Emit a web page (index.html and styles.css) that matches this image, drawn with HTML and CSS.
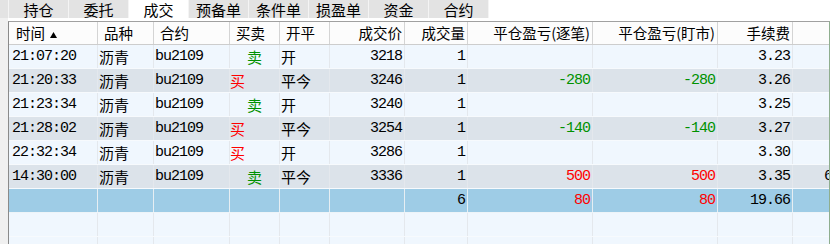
FILE: index.html
```html
<!DOCTYPE html>
<html lang="zh-CN">
<head>
<meta charset="utf-8">
<title>成交</title>
<link rel="stylesheet" href="styles.css">
</head>
<body>
<div class="tabs">
  <div class="tab-lead"></div>
  <div class="tab">持仓</div>
  <div class="tab">委托</div>
  <div class="tab active">成交</div>
  <div class="tab">预备单</div>
  <div class="tab">条件单</div>
  <div class="tab">损盈单</div>
  <div class="tab">资金</div>
  <div class="tab">合约</div>
</div>
<div class="main">
  <div class="gutter"></div>
  <div class="panel">
    <div class="row head">
      <div class="c l">时间 <svg class="sort" width="7" height="6" viewBox="0 0 7 6"><path d="M3.5 0 L7 6 L0 6 Z" fill="#000"/></svg></div>
      <div class="c l">品种</div>
      <div class="c l">合约</div>
      <div class="c l">买卖</div>
      <div class="c l">开平</div>
      <div class="c r">成交价</div>
      <div class="c r">成交量</div>
      <div class="c r">平仓盈亏(逐笔)</div>
      <div class="c r">平仓盈亏(盯市)</div>
      <div class="c r">手续费</div>
      <div class="c"></div>
    </div>

    <div class="row odd">
      <div class="c n t">21:07:20</div><div class="c k">沥青</div><div class="c n t2">bu2109</div>
      <div class="c k sell">卖</div><div class="c k">开</div><div class="c n r">3218</div>
      <div class="c n r">1</div><div class="c n r"></div><div class="c n r"></div>
      <div class="c n r">3.23</div><div class="c"></div>
    </div>
    <div class="row even">
      <div class="c n t">21:20:33</div><div class="c k">沥青</div><div class="c n t2">bu2109</div>
      <div class="c k buy">买</div><div class="c k">平今</div><div class="c n r">3246</div>
      <div class="c n r">1</div><div class="c n r green">-280</div><div class="c n r green">-280</div>
      <div class="c n r">3.26</div><div class="c"></div>
    </div>
    <div class="row odd">
      <div class="c n t">21:23:34</div><div class="c k">沥青</div><div class="c n t2">bu2109</div>
      <div class="c k sell">卖</div><div class="c k">开</div><div class="c n r">3240</div>
      <div class="c n r">1</div><div class="c n r"></div><div class="c n r"></div>
      <div class="c n r">3.25</div><div class="c"></div>
    </div>
    <div class="row even">
      <div class="c n t">21:28:02</div><div class="c k">沥青</div><div class="c n t2">bu2109</div>
      <div class="c k buy">买</div><div class="c k">平今</div><div class="c n r">3254</div>
      <div class="c n r">1</div><div class="c n r green">-140</div><div class="c n r green">-140</div>
      <div class="c n r">3.27</div><div class="c"></div>
    </div>
    <div class="row odd">
      <div class="c n t">22:32:34</div><div class="c k">沥青</div><div class="c n t2">bu2109</div>
      <div class="c k buy">买</div><div class="c k">开</div><div class="c n r">3286</div>
      <div class="c n r">1</div><div class="c n r"></div><div class="c n r"></div>
      <div class="c n r">3.30</div><div class="c"></div>
    </div>
    <div class="row even">
      <div class="c n t">14:30:00</div><div class="c k">沥青</div><div class="c n t2">bu2109</div>
      <div class="c k sell">卖</div><div class="c k">平今</div><div class="c n r">3336</div>
      <div class="c n r">1</div><div class="c n r red">500</div><div class="c n r red">500</div>
      <div class="c n r">3.35</div><div class="c n clip">6</div>
    </div>
    <div class="row total">
      <div class="c"></div><div class="c"></div><div class="c"></div>
      <div class="c"></div><div class="c"></div><div class="c"></div>
      <div class="c n r">6</div><div class="c n r red">80</div><div class="c n r red">80</div>
      <div class="c n r">19.66</div><div class="c"></div>
    </div>
    <div class="row odd">
      <div class="c"></div><div class="c"></div><div class="c"></div><div class="c"></div>
      <div class="c"></div><div class="c"></div><div class="c"></div><div class="c"></div>
      <div class="c"></div><div class="c"></div><div class="c"></div>
    </div>
    <div class="row odd">
      <div class="c"></div><div class="c"></div><div class="c"></div><div class="c"></div>
      <div class="c"></div><div class="c"></div><div class="c"></div><div class="c"></div>
      <div class="c"></div><div class="c"></div><div class="c"></div>
    </div>
  </div>
</div>
</body>
</html>
```
FILE: styles.css
```css
html, body {
  margin: 0;
  padding: 0;
}
body {
  width: 835px;
  height: 244px;
  overflow: hidden;
  background: #ffffff;
  font-family: "Noto Sans CJK SC", sans-serif;
  color: #000;
}
.tabs {
  display: flex;
  height: 18px;
}
.tab-lead {
  width: 8px;
  background: #e3e3e3;
  border-right: 1px solid #f4f4f4;
}
.tab {
  width: 59px;
  height: 18px;
  border-right: 1px solid #f4f4f4;
  background: #e3e3e3;
  text-align: center;
  font-size: 15px;
  line-height: 19px;
}
.tab.active {
  background: #ffffff;
}
.main {
  display: flex;
  height: 226px;
}
.gutter {
  width: 8px;
  flex: none;
  background: #f0f0f0;
}
.panel {
  margin-top: 3px;
  width: 820px;
  flex: none;
  border-left: 1px solid #8a8a8a;
  border-top: 1px solid #a0a0a0;
  border-right: 1px solid #8fae8f;
  background: #f0f7fe;
  overflow: hidden;
}
.row {
  display: grid;
  grid-template-columns: 89px 56px 76px 50px 50px 75px 63px 125px 125px 75px 36px;
  height: 23px;
  border-bottom: 1px solid #f7fafd;
}
.row .c {
  border-right: 1px solid #e4e8ed;
  white-space: nowrap;
  overflow: hidden;
  font-size: 15px;
  line-height: 23px;
  padding: 0 2px 0 1px;
}
.row .c:last-child {
  border-right: none;
}
.head {
  height: 22px;
  background: #fcfcfc;
  border-bottom: 1px solid #cdcdcd;
}
.head .c {
  font-size: 14.5px;
  line-height: 22px;
  padding: 0 6px 0 6px;
  border-right: 1px solid #d4d4d4;
}
.head .c.l:first-child {
  padding-left: 7px;
}
.sort {
  margin-left: 2px;
  vertical-align: 1px;
}
.odd {
  background: #f0f7fe;
}
.even {
  background: #dce3ea;
}
.total {
  background: #9ecce6;
  border-bottom-color: #eef4f8;
}
.total .c {
  border-right-color: #e6eef3;
}
.l {
  text-align: left;
}
.r {
  text-align: right;
}
.n {
  font-family: "Liberation Mono", monospace;
  letter-spacing: -1px;
}
.row .c.t {
  padding-left: 3px;
}
.row .c.t2 {
  padding-left: 1px;
}
.row .c.k {
  padding-left: 1px;
}
.row .c.buy {
  color: #ff0000;
  padding-left: 0;
}
.row .c.sell {
  color: #009100;
  padding-left: 17px;
}
.row .c.r {
  padding-right: 2px;
}
.green {
  color: #009100;
}
.red {
  color: #ff0000;
}
.row .c.clip {
  padding-left: 31px;
  padding-right: 0;
}
```
